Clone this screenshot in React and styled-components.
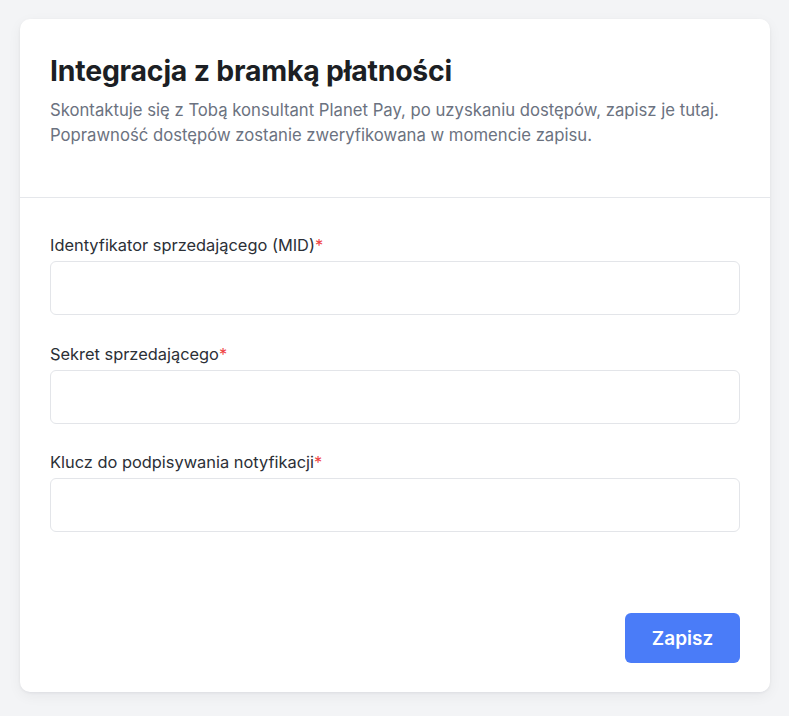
import React from "react";
import styled, { createGlobalStyle } from "styled-components";

const GlobalStyle = createGlobalStyle`
  html, body {
    margin: 0;
    padding: 0;
    background: #f3f4f6;
    font-family: Inter, "Noto Sans", Arial, sans-serif;
  }
  * { box-sizing: border-box; }
`;

const Page = styled.div`
  padding: 19px 19px 24px 20px;
  min-height: 716px;
`;

const Card = styled.div`
  background: #ffffff;
  border-radius: 10px;
  box-shadow: 0 1px 3px rgba(17, 24, 39, 0.06), 0 4px 14px rgba(17, 24, 39, 0.05);
  display: flex;
  flex-direction: column;
`;

const Header = styled.div`
  padding: 35px 30px 49px;
  border-bottom: 1px solid #e5e7eb;
`;

const Title = styled.h1`
  margin: 0;
  font-size: 28.4px;
  line-height: 34px;
  font-weight: 700;
  color: #1c1f24;
  letter-spacing: -0.2px;
`;

const Subtitle = styled.p`
  margin: 10px 0 0;
  font-size: 16.7px;
  line-height: 25px;
  color: #6b7280;
`;

const Body = styled.form`
  padding: 35px 30px 0;
  display: flex;
  flex-direction: column;
  gap: 26.5px;
`;

const Field = styled.div`
  display: flex;
  flex-direction: column;
  gap: 4px;
`;

const Label = styled.label`
  font-size: 16.4px;
  line-height: 24px;
  color: #2b2f36;
`;

const Required = styled.span`
  color: #ef4444;
`;

const Input = styled.input`
  height: 54px;
  width: 100%;
  border: 1px solid #e3e5e9;
  border-radius: 6px;
  padding: 0 14px;
  font-size: 16px;
  font-family: inherit;
  outline: none;
  background: #fff;
`;

const Footer = styled.div`
  display: flex;
  justify-content: flex-end;
  padding: 81px 30px 29px;
`;

const Button = styled.button`
  width: 115px;
  height: 50px;
  border: none;
  border-radius: 6px;
  background: #4a7cf8;
  color: #ffffff;
  font-family: inherit;
  font-size: 19px;
  font-weight: 600;
  cursor: pointer;
`;

const fields = [
  { id: "mid", label: "Identyfikator sprzedającego (MID)" },
  { id: "secret", label: "Sekret sprzedającego" },
  { id: "key", label: "Klucz do podpisywania notyfikacji" },
];

export default function App() {
  return (
    <>
      <GlobalStyle />
      <Page>
        <Card>
          <Header>
            <Title>Integracja z bramką płatności</Title>
            <Subtitle>
              Skontaktuje się z Tobą konsultant Planet Pay, po uzyskaniu dostępów, zapisz je tutaj.
              <br />
              Poprawność dostępów zostanie zweryfikowana w momencie zapisu.
            </Subtitle>
          </Header>
          <Body onSubmit={(e) => e.preventDefault()}>
            {fields.map((f) => (
              <Field key={f.id}>
                <Label htmlFor={f.id}>
                  {f.label}
                  <Required>*</Required>
                </Label>
                <Input id={f.id} type="text" />
              </Field>
            ))}
          </Body>
          <Footer>
            <Button type="button">Zapisz</Button>
          </Footer>
        </Card>
      </Page>
    </>
  );
}
